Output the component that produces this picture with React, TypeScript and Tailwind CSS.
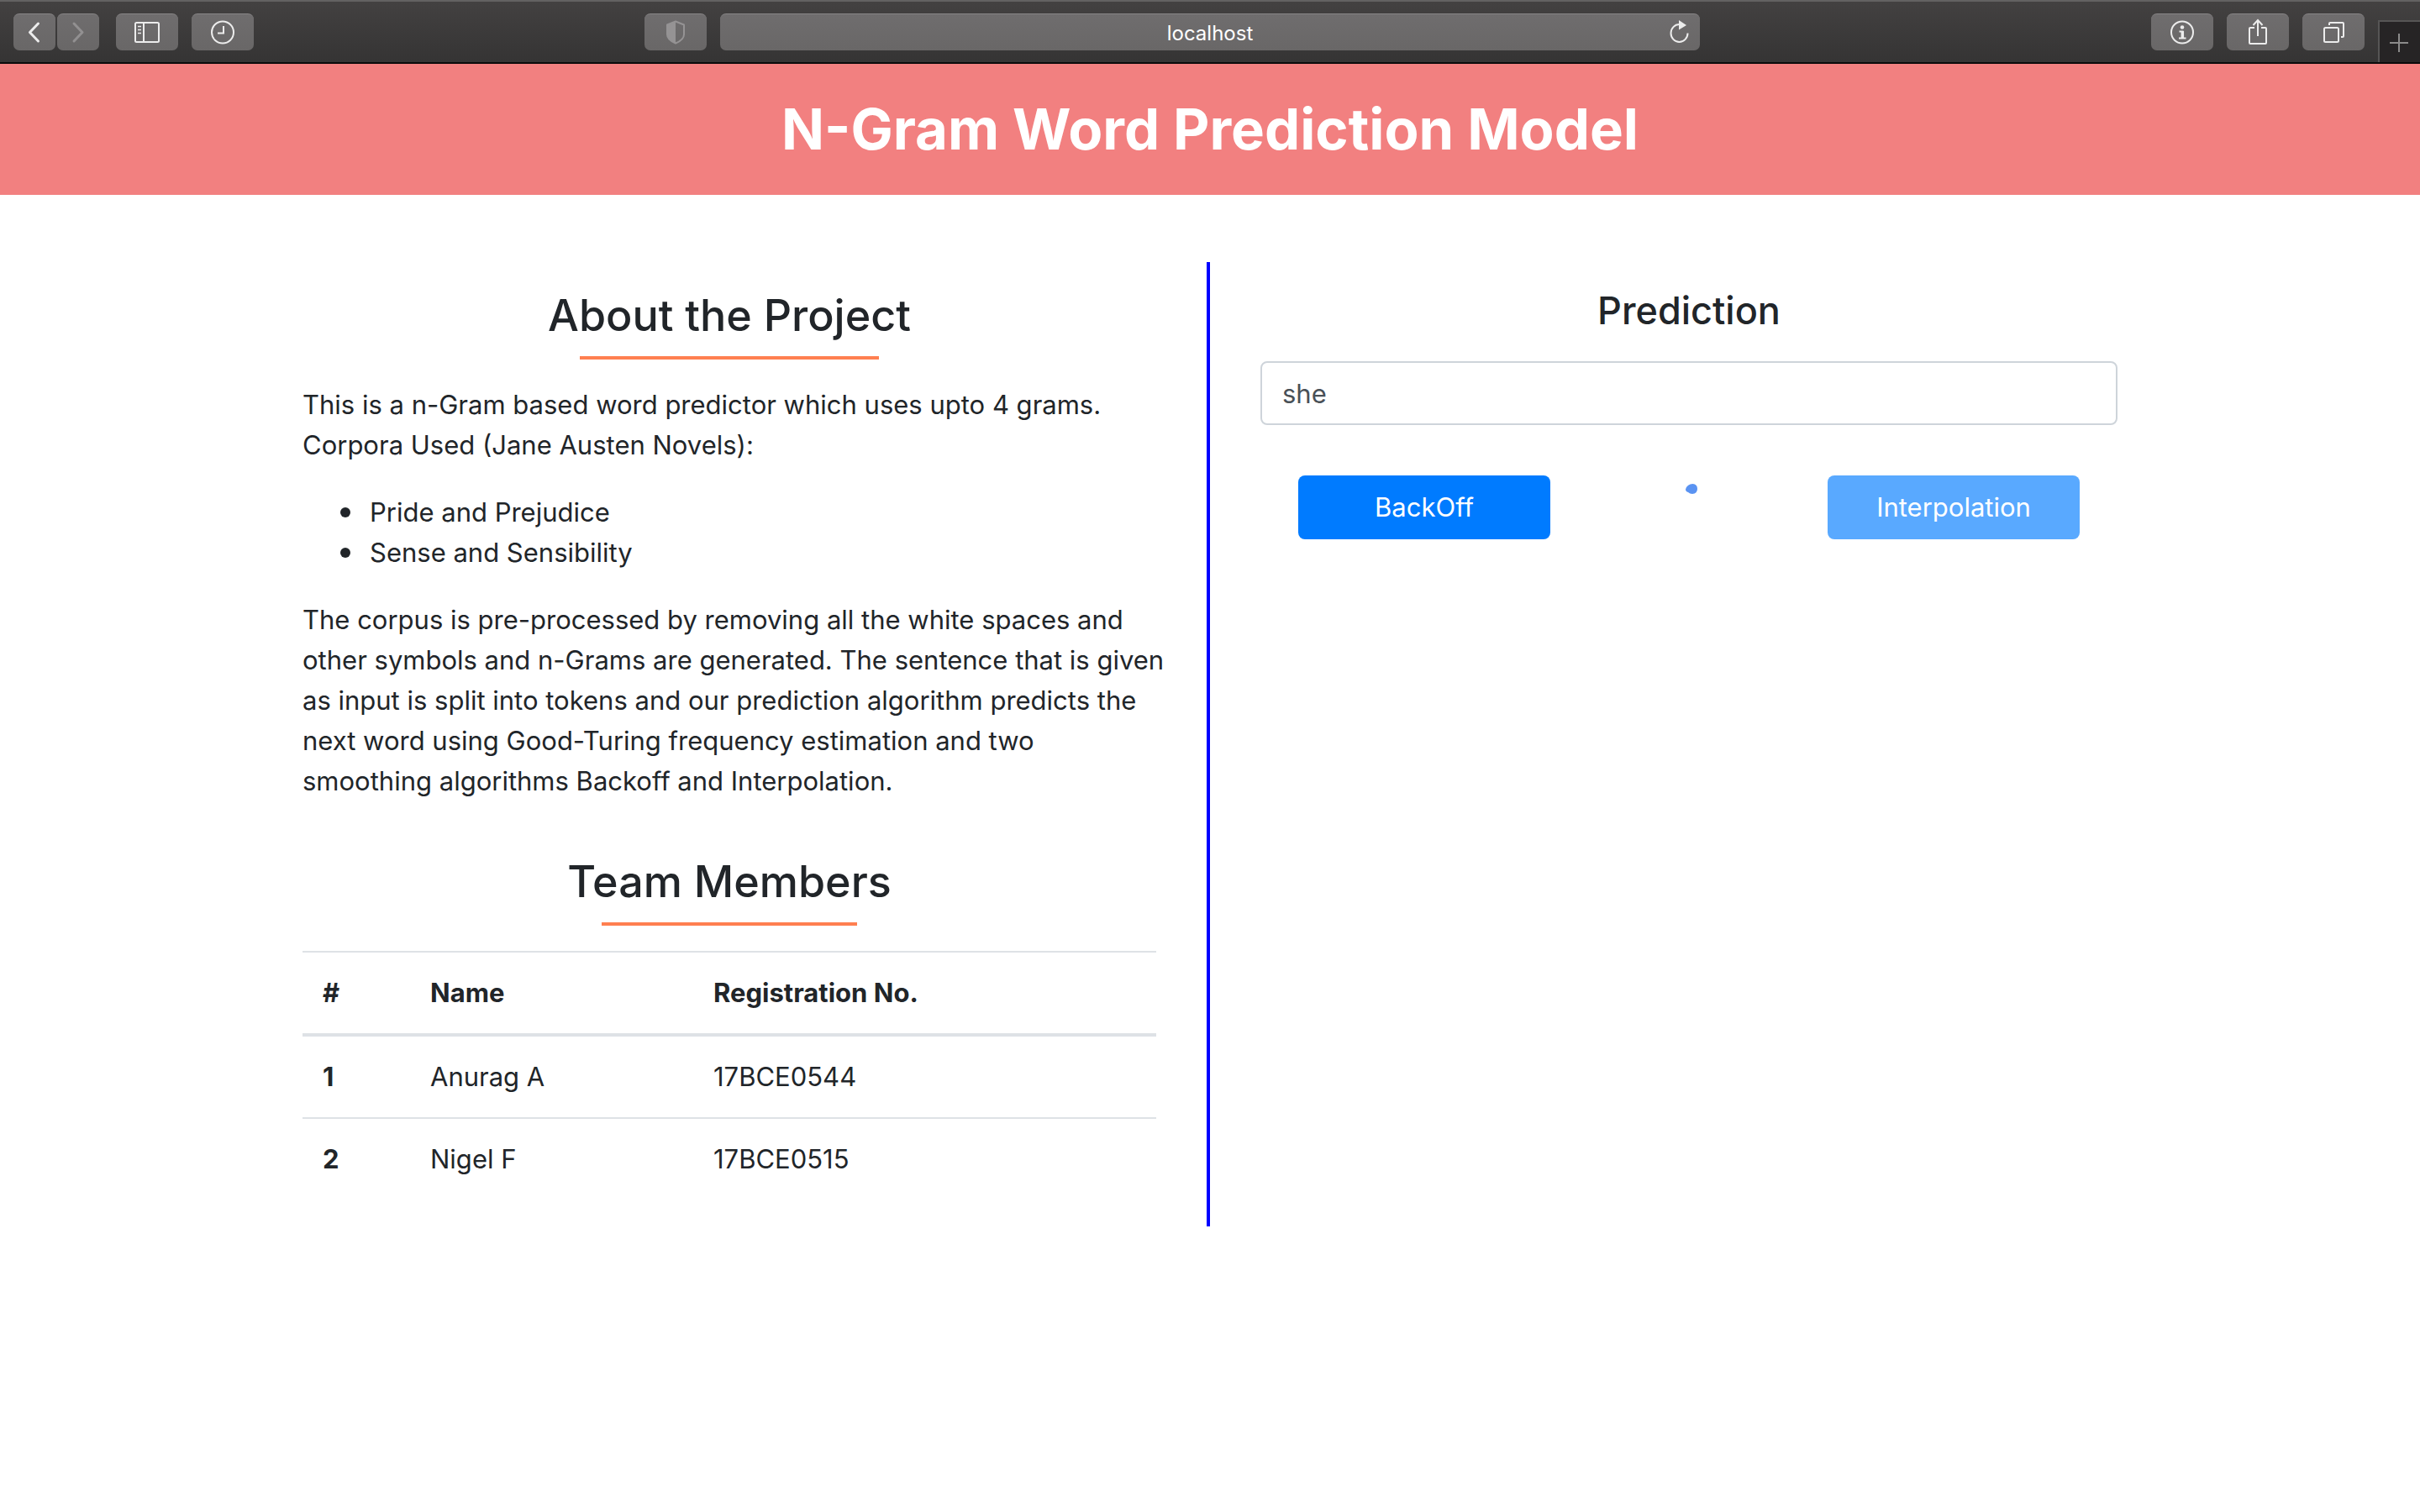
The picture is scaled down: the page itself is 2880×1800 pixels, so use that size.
import type { ReactNode } from "react";

const toolButton =
  "flex h-11 shrink-0 items-center justify-center rounded-[7px] border-t border-[#868485] bg-linear-to-b from-[#6f6d6e] to-[#696767]";

function ToolButton({ label, narrow, children }: { label: string; narrow?: boolean; children: ReactNode }) {
  return (
    <button type="button" aria-label={label} className={`${toolButton} ${narrow ? "w-[50px]" : "w-[74px]"}`}>
      {children}
    </button>
  );
}

function Icon({ children, className = "text-[#ececec]" }: { children: ReactNode; className?: string }) {
  return (
    <svg
      width="36"
      height="36"
      viewBox="0 0 36 36"
      fill="none"
      stroke="currentColor"
      strokeWidth="2"
      className={className}
      aria-hidden="true"
    >
      {children}
    </svg>
  );
}

function Toolbar() {
  return (
    <div className="grid h-[76px] grid-cols-[841fr_1166fr_841fr] gap-4 border-t-2 border-b-2 border-t-[#636262] border-b-[#0a0a0a] bg-linear-to-b from-[#434141] to-[#353434]">
      <div className="flex items-start pt-3.5 pl-4">
        <div className="flex gap-0.5">
          <ToolButton label="Back" narrow>
            <Icon>
              <path d="M22.5 7L12.5 17.500L22.5 28" strokeWidth="3" strokeLinecap="round" strokeLinejoin="round" />
            </Icon>
          </ToolButton>
          <ToolButton label="Forward" narrow>
            <Icon className="text-[#929091]">
              <path d="M13 7L23 17.500L13 28" strokeWidth="3" strokeLinecap="round" strokeLinejoin="round" />
            </Icon>
          </ToolButton>
        </div>
        <div className="ml-5 flex gap-4">
          <ToolButton label="Show sidebar">
            <Icon>
              <rect x="4" y="6" width="28" height="23" rx="1.500" />
              <path d="M14 6V29" />
              <path d="M7 10.500H11M7 14.500H11M7 18.500H11" strokeWidth="1.500" />
            </Icon>
          </ToolButton>
          <ToolButton label="History">
            <Icon>
              <circle cx="18" cy="17.500" r="13" />
              <path d="M19 10V18.500H12" />
            </Icon>
          </ToolButton>
        </div>
        <div className="ml-auto">
          <ToolButton label="Privacy report">
            <Icon className="text-[#959394]">
              <path d="M18 4.500L28 8.500V20C28 24 24 28 18 30.500C12 28 8 24 8 20V8.500Z" strokeLinejoin="round" />
              <path d="M18 4.500L8 8.500V20C8 24 12 28 18 30.500Z" fill="currentColor" stroke="none" />
            </Icon>
          </ToolButton>
        </div>
      </div>

      <div className="pt-3.5">
        <div className="grid h-11 grid-cols-[48px_1fr_48px] items-center rounded-[7px] border-t border-[#868485] bg-linear-to-b from-[#6f6d6e] to-[#696767]">
          <input
            type="text"
            aria-label="Address"
            defaultValue="localhost"
            className="col-start-2 w-full min-w-0 bg-transparent pt-0.5 text-center text-[24px] leading-8 text-white outline-none"
          />
          <button type="button" aria-label="Reload" className="flex items-center justify-center">
            <Icon>
              <path d="M27.500 18.500A10 10.500 0 1 1 17.500 8" />
              <path d="M17 3L26 9L17 14.500Z" fill="currentColor" stroke="none" />
            </Icon>
          </button>
        </div>
      </div>

      <div className="flex items-start justify-end gap-4 pt-3.5">
        <ToolButton label="Site information">
          <Icon>
            <circle cx="18" cy="17.500" r="13" />
            <circle cx="18" cy="11.500" r="2.300" fill="currentColor" stroke="none" />
            <path d="M14.500 16.500H18.500V24.500M14 24.500H22.500" strokeWidth="2" />
            <path d="M18.300 16V25" strokeWidth="3.500" />
          </Icon>
        </ToolButton>
        <ToolButton label="Share">
          <Icon>
            <path d="M14 12H9Q8 12 8 13V30Q8 31 9 31H27Q28 31 28 30V13Q28 12 27 12H22" />
            <path d="M18 22V3.500M12.500 9L18 3L23.500 9" />
          </Icon>
        </ToolButton>
        <ToolButton label="Show tabs">
          <Icon>
            <rect x="7" y="12" width="17" height="17" rx="1.500" />
            <path d="M13 9V7Q13 6 14 6H29Q30 6 30 7V22Q30 23 29 23H27" />
          </Icon>
        </ToolButton>
        <button
          type="button"
          aria-label="New tab"
          className="mt-2 flex h-[50px] w-[50px] items-center justify-center border-t-2 border-l-2 border-[#565555] bg-[#262425] text-[#8b8a8a]"
        >
          <svg width="24" height="24" viewBox="0 0 24 24" fill="none" stroke="currentColor" strokeWidth="2" aria-hidden="true">
            <path d="M11 2V24M0 13H22" />
          </svg>
        </button>
      </div>
    </div>
  );
}

const novels = ["Pride and Prejudice", "Sense and Sensibility"];

const members = [
  { id: 1, name: "Anurag A", registration: "17BCE0544" },
  { id: 2, name: "Nigel F", registration: "17BCE0515" },
];

function About() {
  return (
    <section className="border-r-4 border-[#0000ff] px-[60px] pt-[30px] pb-8">
      <h2 className="text-center text-[52px] leading-[68px] font-medium">About the Project</h2>
      <hr className="mx-auto mt-3.5 w-[35%] border-t-4 border-[#ff7f50]" />
      <div className="mt-[30px] -mr-4 flex flex-col gap-8">
        <p>
          This is a n-Gram based word predictor which uses upto 4 grams.
          <br />
          Corpora Used (Jane Austen Novels):
        </p>
        <ul className="pl-[45px]">
          {novels.map((novel) => (
            <li
              key={novel}
              className="flex items-center before:mr-[23px] before:size-3 before:rounded-full before:bg-current"
            >
              {novel}
            </li>
          ))}
        </ul>
        <p>
          The corpus is pre-processed by removing all the white spaces and other symbols and n-Grams are generated. The
          sentence that is given as input is split into tokens and our prediction algorithm predicts the next word using
          Good-Turing frequency estimation and two
          <br />
          smoothing algorithms Backoff and Interpolation.
        </p>
      </div>
      <h2 className="mt-[62px] text-center text-[52px] leading-[68px] font-medium">Team Members</h2>
      <hr className="mx-auto mt-3.5 w-[30%] border-t-4 border-[#ff7f50]" />
      <table className="mt-[30px] w-full table-fixed border-separate border-spacing-0 text-left">
        <colgroup>
          <col className="w-[128px]" />
          <col className="w-[337px]" />
          <col />
        </colgroup>
        <thead>
          <tr>
            {["#", "Name", "Registration No."].map((heading) => (
              <th key={heading} scope="col" className="border-t-2 border-b-4 border-[#dee2e6] p-6 font-bold">
                {heading}
              </th>
            ))}
          </tr>
        </thead>
        <tbody>
          {members.map((member) => (
            <tr key={member.id} className="group">
              <th scope="row" className="border-t-2 border-[#dee2e6] p-6 font-bold group-first:border-t-0">
                {member.id}
              </th>
              <td className="border-t-2 border-[#dee2e6] p-6 group-first:border-t-0">{member.name}</td>
              <td className="border-t-2 border-[#dee2e6] p-6 group-first:border-t-0">{member.registration}</td>
            </tr>
          ))}
        </tbody>
      </table>
    </section>
  );
}

function Prediction() {
  return (
    <section className="px-[60px] pt-[30px]">
      <h3 className="text-center text-[45px] leading-[56px] font-medium">
        <label htmlFor="sentence">Prediction</label>
      </h3>
      <input
        id="sentence"
        type="text"
        defaultValue="she"
        className="mt-8 h-[76px] w-full rounded-lg border-2 border-[#ced4da] bg-white px-6 text-[#495057] outline-none"
      />
      <div className="mt-[60px] flex justify-between px-[45px]">
        <button type="button" className="h-[76px] w-[300px] rounded-lg bg-[#007bff] text-white">
          BackOff
        </button>
        <svg width="26" height="76" viewBox="0 0 26 76" role="img" aria-label="Loading">
          <path d="M9 16.500Q11 10 17.500 10Q23 10.500 23 16Q23 21.500 17 22Q14 22 12 20Q9 19 9 16.500Z" fill="#5a93f2" />
        </svg>
        <button type="button" disabled className="h-[76px] w-[300px] rounded-lg bg-[#59a9ff] text-white">
          Interpolation
        </button>
      </div>
    </section>
  );
}

export default function App() {
  return (
    <div className="min-h-screen bg-white font-['Inter','Liberation_Sans',sans-serif] text-[31px] leading-[48px] text-[#212529]">
      <Toolbar />
      <header className="bg-[#f28080] py-9">
        <h1 className="text-center text-[67px] leading-[84px] font-bold text-white">N-Gram Word Prediction Model</h1>
      </header>
      <main className="mx-auto mt-20 grid max-w-[2280px] grid-cols-2">
        <About />
        <Prediction />
      </main>
    </div>
  );
}
